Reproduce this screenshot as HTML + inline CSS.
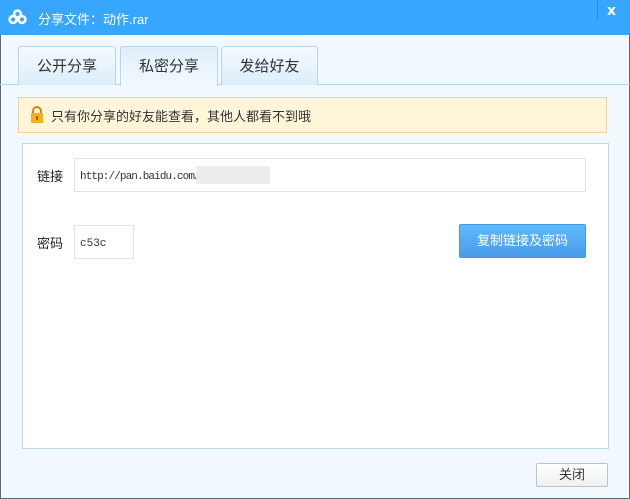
<!DOCTYPE html>
<html><head><meta charset="utf-8"><style>
*{margin:0;padding:0;box-sizing:border-box}
body{width:630px;height:499px;overflow:hidden;font-family:"Liberation Sans","Noto Sans CJK SC",sans-serif;font-size:12px;color:#333}
.win{position:absolute;left:0;top:0;width:630px;height:499px;background:#f2f9fe;border:1px solid #5b6b78}
.title{position:absolute;left:-1px;top:-1px;width:630px;height:35px;background:#36a6fe;color:#fff;font-size:13px}
.title .t{position:absolute;left:38px;top:9px}
.close{position:absolute;left:607px;top:3px;font-weight:bold;font-size:14px;color:#fff;font-family:"DejaVu Sans",sans-serif}
.sep{position:absolute;left:597px;top:0;width:1px;height:20px;background:#2a8ad8}
.tabline{position:absolute;left:-1px;top:83px;width:630px;height:1px;background:#b4d6ef}
.tab{position:absolute;top:45px;height:39px;border:1px solid #b4d6ef;border-bottom:none;border-radius:3px 3px 0 0;background:linear-gradient(#f4faff,#dcedfb);text-align:center;line-height:40px;font-size:15px;color:#333}
.tab.on{background:linear-gradient(#e0eef9,#f2f9fe);height:40px}
.notice{position:absolute;left:17px;top:96px;width:589px;height:36px;background:#fff5d8;border:1px solid #f0d48c;font-size:13px;color:#333}
.notice span{position:absolute;left:32px;top:8px}
.panel{position:absolute;left:21px;top:142px;width:587px;height:306px;background:#fff;border:1px solid #b9d8ee}
.lbl{position:absolute;font-size:13px;color:#222}
.inp{position:absolute;background:#fff;border:1px solid #e2e2e2;font-family:"Liberation Mono","Noto Sans CJK SC",monospace;font-size:11px;line-height:12px;color:#333}
.btn{position:absolute;left:436px;top:80px;width:127px;height:34px;border:1px solid #4a95df;border-radius:2px;background:linear-gradient(#5dbcfc,#4a9aec);color:#fff;text-align:center;line-height:32px;font-size:13px}
.cbtn{position:absolute;left:535px;top:462px;width:72px;height:24px;border:1px solid #b8c4ce;border-radius:2px;background:linear-gradient(#fff,#eef0f2);text-align:center;line-height:22px;font-size:13px}
</style></head><body>
<div class="win">
<div class="title">
<svg style="position:absolute;left:8px;top:9px" width="19" height="16" viewBox="0 0 19 16"><g fill="none" stroke="#fff" stroke-width="2.6"><circle cx="9.5" cy="5" r="3.4"/><circle cx="5" cy="10.5" r="3.4"/><circle cx="14" cy="10.5" r="3.4"/></g></svg>
<span class="t">分享文件：动作.rar</span>
<div class="sep"></div>
<span class="close">x</span>
</div>
<div class="tabline"></div>
<div class="tab" style="left:17px;width:98px">公开分享</div>
<div class="tab on" style="left:119px;width:98px">私密分享</div>
<div class="tab" style="left:220px;width:97px">发给好友</div>
<div class="notice">
<svg style="position:absolute;left:11px;top:7px" width="14" height="19" viewBox="0 0 14 19"><path d="M3 9V6a4 4 0 0 1 8 0v3" fill="none" stroke="#c98a10" stroke-width="2"/><rect x="1" y="8" width="12" height="10" rx="1" fill="#f3b21c"/><rect x="6" y="11" width="2" height="4" fill="#a06a00"/></svg>
<span>只有你分享的好友能查看，其他人都看不到哦</span></div>
<div class="panel">
<span class="lbl" style="left:14px;top:22px">链接</span>
<div class="inp" style="left:51px;top:14px;width:512px;height:34px"><span style="position:absolute;left:5px;top:12px;letter-spacing:-0.9px;white-space:nowrap">http://pan.baidu.com/</span><div style="position:absolute;left:121px;top:7px;width:74px;height:18px;background:#ececec"></div></div>
<span class="lbl" style="left:14px;top:89px">密码</span>
<div class="inp" style="left:51px;top:81px;width:60px;height:34px"><span style="position:absolute;left:5px;top:12px">c53c</span></div>
<div class="btn">复制链接及密码</div>
</div>
<div class="cbtn">关闭</div>
</div>
</body></html>
